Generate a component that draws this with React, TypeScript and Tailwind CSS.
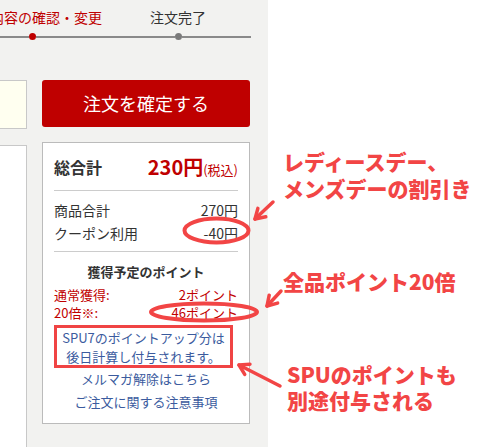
import React from "react";

const MARK = "#f24545";

// hand-drawn style arrow for the annotations
function Arrow({ x1, y1, x2, y2 }: { x1: number; y1: number; x2: number; y2: number }) {
  const a = Math.atan2(y2 - y1, x2 - x1);
  const len = 11;
  const spread = 0.55;
  const p1 = [x2 - len * Math.cos(a - spread), y2 - len * Math.sin(a - spread)];
  const p2 = [x2 - len * Math.cos(a + spread), y2 - len * Math.sin(a + spread)];
  return (
    <g stroke={MARK} strokeWidth={3.5} strokeLinecap="round" strokeLinejoin="round" fill="none">
      <line x1={x1} y1={y1} x2={x2} y2={y2} />
      <polyline points={`${p1[0]},${p1[1]} ${x2},${y2} ${p2[0]},${p2[1]}`} />
    </g>
  );
}

function Step({ label, active }: { label: string; active?: boolean }) {
  return (
    <div className="w-[146px] shrink-0 flex flex-col items-center">
      <div
        className={`text-[14px] leading-[20px] whitespace-nowrap ${
          active ? "text-[#bf0000]" : "text-[#333]"
        }`}
      >
        {label}
      </div>
      <div className="mt-[6px] w-full flex items-center">
        <div className="flex-1 h-[2px] bg-[#8a8a8a]" />
        <div
          className={`w-[7px] h-[7px] rounded-full ${active ? "bg-[#bf0000]" : "bg-[#7a7a7a]"}`}
        />
        <div className="flex-1 h-[2px] bg-[#8a8a8a]" />
      </div>
    </div>
  );
}

function Summary() {
  return (
    <div className="mt-[15px] border border-[#bbb] bg-white px-[11px] text-[#333]">
      <div className="h-[48px] border-b border-[#ccc] flex items-center justify-between">
        <span className="text-[16px] font-bold">総合計</span>
        <span className="flex items-baseline text-[#bf0000]">
          <span className="text-[20px] font-bold">230円</span>
          <span className="text-[13px]">(税込)</span>
        </span>
      </div>
      <div className="pt-[8px] pb-[6px] border-b border-[#ccc] text-[14px]">
        <div className="h-[23px] flex items-center justify-between">
          <span>商品合計</span>
          <span>270円</span>
        </div>
        <div className="h-[23px] flex items-center justify-between">
          <span>クーポン利用</span>
          <span>-40円</span>
        </div>
      </div>
      <div className="pt-[10px] pb-[9px] text-[13px]">
        <div className="h-[20px] leading-[20px] text-center font-bold">獲得予定のポイント</div>
        <div className="mt-[4px] text-[#bf0000]">
          <div className="h-[18px] leading-[18px] flex justify-between">
            <span>通常獲得:</span>
            <span>2ポイント</span>
          </div>
          <div className="h-[18px] leading-[18px] flex justify-between">
            <span>20倍※:</span>
            <span>46ポイント</span>
          </div>
        </div>
        <div className="mt-[3px] w-[179px] h-[43px] border-[3px] border-[#f04444] flex flex-col items-center justify-center leading-[19px] text-[#3b5b9e]">
          <span>SPU7のポイントアップ分は</span>
          <span>後日計算し付与されます。</span>
        </div>
        <div className="h-[22px] leading-[22px] text-center text-[#3b5b9e]">メルマガ解除はこちら</div>
        <div className="h-[24px] leading-[24px] text-center text-[#3b5b9e]">ご注文に関する注意事項</div>
      </div>
    </div>
  );
}

export default function App() {
  return (
    <div
      className="relative w-[499px] h-[447px] flex overflow-hidden bg-white"
      style={{ fontFamily: '"Noto Sans CJK JP", "Noto Sans", sans-serif' }}
    >
      <div className="w-[268px] shrink-0 bg-[#f2f2f0] overflow-hidden">
        <div className="pt-[7px] ml-[-41px] flex">
          <Step label="注文内容の確認・変更" active />
          <Step label="注文完了" />
        </div>

        <div className="mt-[40px] ml-[-20px] flex gap-[15px]">
          <div className="w-[47px] shrink-0 flex flex-col gap-[16px]">
            <div className="h-[49px] border border-[#c8c8c8] bg-[#fffff0]" />
            <div className="h-[320px] border border-[#c8c8c8] bg-white" />
          </div>
          <div className="w-[208px] shrink-0">
            <button className="w-full h-[47px] rounded-[3px] bg-[#bf0000] text-white text-[18px]">
              注文を確定する
            </button>
            <Summary />
          </div>
        </div>
      </div>

      <div className="flex-1 pl-[15px] pt-[148px] text-[21px] font-black text-[#f24545] whitespace-nowrap">
        <div className="leading-[27px]">
          <div>レディースデー、</div>
          <div>メンズデーの割引き</div>
        </div>
        <div className="mt-[66px] leading-[27px]">全品ポイント20倍</div>
        <div className="mt-[66px] ml-[4px] leading-[26px]">
          <div>SPUのポイントも</div>
          <div>別途付与される</div>
        </div>
      </div>

      <svg className="absolute inset-0 pointer-events-none" width={499} height={447}>
        <ellipse cx={216.5} cy={230.5} rx={32} ry={12} fill="none" stroke={MARK} strokeWidth={4} />
        <ellipse cx={204} cy={312} rx={53} ry={8.5} fill="none" stroke={MARK} strokeWidth={4} />
        <Arrow x1={273} y1={202} x2={255} y2={219} />
        <Arrow x1={281} y1={291} x2={267} y2={306} />
        <Arrow x1={280} y1={386} x2={239} y2={365} />
      </svg>
    </div>
  );
}
